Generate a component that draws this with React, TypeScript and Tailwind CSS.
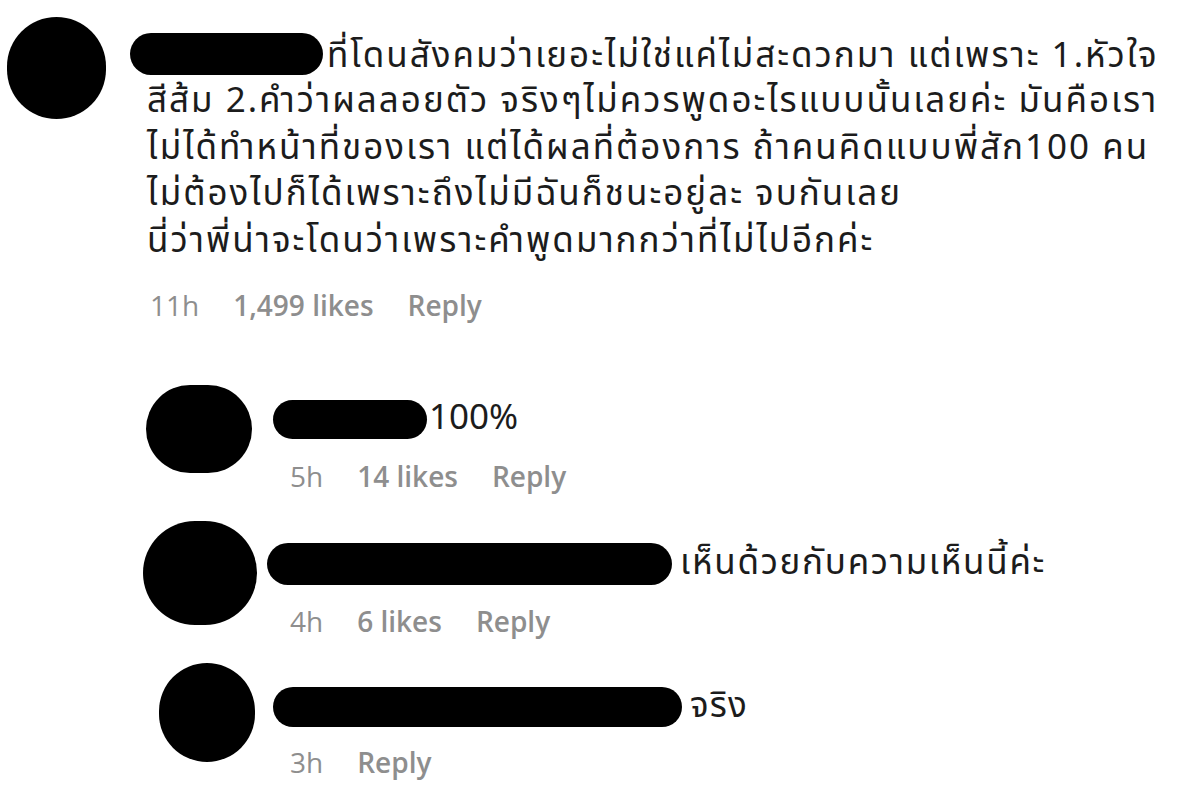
const thai = "font-['Tahoma','Leelawadee_UI','Noto_Sans_Thai','Noto_Sans','DejaVu_Sans',sans-serif]";

const lines = [
  "สีส้ม 2.คำว่าผลลอยตัว จริงๆไม่ควรพูดอะไรแบบนั้นเลยค่ะ มันคือเรา",
  "ไม่ได้ทำหน้าที่ของเรา แต่ได้ผลที่ต้องการ ถ้าคนคิดแบบพี่สัก100 คน",
  "ไม่ต้องไปก็ได้เพราะถึงไม่มีฉันก็ชนะอยู่ละ จบกันเลย",
  "นี่ว่าพี่น่าจะโดนว่าเพราะคำพูดมากกว่าที่ไม่ไปอีกค่ะ",
];

function Meta({ time, likes, className }: { time: string; likes?: string; className: string }) {
  return (
    <div className={"flex items-baseline gap-[34px] text-[28px] text-[#8e8e8e] font-['Open_Sans',sans-serif] " + className}>
      <span>{time}</span>
      {likes && <span className="font-semibold">{likes}</span>}
      <span className="font-semibold">Reply</span>
    </div>
  );
}

const replies = [
  {
    row: "h-[136px]",
    avatar: "ml-[146px] w-[106px] h-[88px]",
    body: "ml-[21px] mt-[8px]",
    blob: "w-[154px] h-[39px]",
    text: "100%",
    gap: "ml-[2px] tracking-normal",
    meta: "pl-[17px] mt-[9px]",
    time: "5h",
    likes: "14 likes",
  },
  {
    row: "h-[142px]",
    avatar: "ml-[143px] w-[114px] h-[104px]",
    body: "ml-[10px] mt-[17px]",
    blob: "w-[405px] h-[42px]",
    text: "เห็นด้วยกับความเห็นนี้ค่ะ",
    gap: "ml-[8px] tracking-[1.7px]",
    meta: "pl-[23px] mt-[9px]",
    time: "4h",
    likes: "6 likes",
  },
  {
    row: "h-[145px]",
    avatar: "ml-[159px] w-[96px] h-[99px]",
    body: "ml-[18px] mt-[18px]",
    blob: "w-[409px] h-[40px]",
    text: "จริง",
    gap: "ml-[8px] tracking-[1.2px]",
    meta: "pl-[17px] mt-[7px]",
    time: "3h",
    likes: undefined,
  },
];

export default function App() {
  return (
    <div className={"w-[1200px] h-[808px] overflow-hidden bg-white text-[#1c1c1c] " + thai}>
      <div className="flex items-start pl-[7px] pt-[17px] h-[385px]">
        <div className="w-[99px] h-[102px] shrink-0 rounded-full bg-black" />
        <div className="ml-[24px] mt-[16px]">
          <div className="flex items-center h-[42px] text-[35px] tracking-[2px] whitespace-nowrap">
            <span className="w-[193px] h-[42px] rounded-full bg-black" />
            <span className="ml-[4px] mt-[6px] leading-[42px]">ที่โดนสังคมว่าเยอะไม่ใช่แค่ไม่สะดวกมา แต่เพราะ 1.หัวใจ</span>
          </div>
          <div className="pl-[17px] pt-[4px] text-[35px] tracking-[2px] leading-[46.5px] whitespace-nowrap">
            {lines.map((l) => (
              <div key={l}>{l}</div>
            ))}
          </div>
          <Meta time="11h" likes="1,499 likes" className="pl-[20px] mt-[19px]" />
        </div>
      </div>

      {replies.map((r) => (
        <div key={r.time} className={"flex items-start " + r.row}>
          <div className={"shrink-0 rounded-full bg-black " + r.avatar} />
          <div className={r.body}>
            <div className="flex items-center text-[35px] whitespace-nowrap">
              <span className={"rounded-full bg-black " + r.blob} />
              <span className={r.gap}>{r.text}</span>
            </div>
            <Meta time={r.time} likes={r.likes} className={r.meta} />
          </div>
        </div>
      ))}
    </div>
  );
}
